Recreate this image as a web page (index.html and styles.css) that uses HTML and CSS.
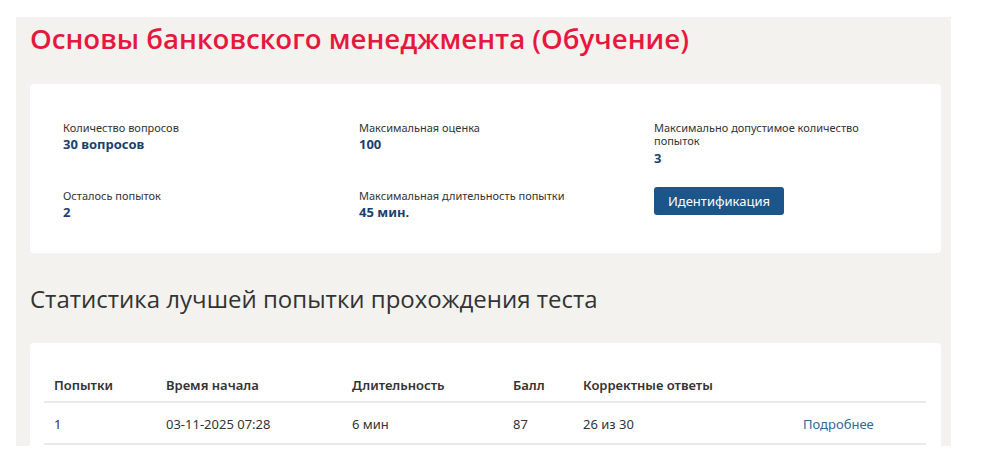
FILE: index.html
```html
<!DOCTYPE html>
<html lang="ru">
<head>
<meta charset="utf-8">
<title>Основы банковского менеджмента (Обучение)</title>
<link rel="stylesheet" href="styles.css">
</head>
<body>
<div class="page">
  <h1 class="title">Основы банковского менеджмента (Обучение)</h1>
  <section class="card info">
    <div class="grid">
      <div class="item">
        <div class="label">Количество вопросов</div>
        <div class="value">30 вопросов</div>
      </div>
      <div class="item">
        <div class="label">Максимальная оценка</div>
        <div class="value">100</div>
      </div>
      <div class="item">
        <div class="label narrow">Максимально допустимое количество попыток</div>
        <div class="value">3</div>
      </div>
      <div class="item">
        <div class="label">Осталось попыток</div>
        <div class="value">2</div>
      </div>
      <div class="item">
        <div class="label">Максимальная длительность попытки</div>
        <div class="value">45 мин.</div>
      </div>
      <div class="item">
        <button class="btn">Идентификация</button>
      </div>
    </div>
  </section>
  <h2 class="subtitle">Статистика лучшей попытки прохождения теста</h2>
  <section class="card stats">
    <table class="table">
      <thead>
        <tr>
          <th class="c1">Попытки</th>
          <th class="c2">Время начала</th>
          <th class="c3">Длительность</th>
          <th class="c4">Балл</th>
          <th class="c5">Корректные ответы</th>
          <th class="c6"></th>
        </tr>
      </thead>
      <tbody>
        <tr>
          <td>1</td>
          <td>03-11-2025 07:28</td>
          <td>6 мин</td>
          <td>87</td>
          <td>26 из 30</td>
          <td><a class="link" href="#">Подробнее</a></td>
        </tr>
      </tbody>
    </table>
  </section>
</div>
</body>
</html>
```
FILE: styles.css
```css
* { box-sizing: border-box; }
body {
  margin: 0;
  background: #ffffff;
  font-family: "Noto Sans", "Open Sans", sans-serif;
  color: #333333;
}
.page {
  margin: 17px 0 0 16px;
  width: 935px;
  height: 429px;
  overflow: hidden;
  background: #f3f2ef;
  padding: 0 10px 0 14px;
}
.title {
  margin: 0;
  padding-top: 3px;
  height: 67px;
  font-family: "Open Sans", "Noto Sans", sans-serif;
  font-weight: 600;
  font-size: 27.6px;
  line-height: 36px;
  color: #e8173e;
}
.card {
  background: #ffffff;
  border-radius: 4px;
}
.info {
  height: 169px;
  padding: 36px 0 0 33px;
}
.grid {
  display: grid;
  grid-template-columns: 296px 295px 280px;
  row-gap: 21px;
}
.label {
  font-size: 11px;
  line-height: 15px;
  color: #333333;
}
.label.narrow {
  max-width: 215px;
  line-height: 13px;
  padding-top: 1px;
  margin-bottom: 2px;
}
.value {
  font-size: 13px;
  line-height: 18px;
  font-weight: 700;
  color: #1c3f6e;
}
.btn {
  margin-top: -1px;
  height: 28px;
  width: 130px;
  padding: 0;
  border: none;
  border-radius: 3px;
  background: #1b5589;
  color: #ffffff;
  font-family: "Noto Sans", sans-serif;
  font-size: 13px;
}
.subtitle {
  margin: 0;
  height: 90px;
  padding-top: 30px;
  font-family: "Open Sans", "Noto Sans", sans-serif;
  font-weight: 400;
  font-size: 24px;
  line-height: 32px;
  color: #333333;
}
.stats {
  height: 120px;
  padding: 28px 15px 0 14px;
}
.table {
  width: 100%;
  border-collapse: collapse;
  font-size: 13px;
}
.table th {
  text-align: left;
  font-weight: 600;
  padding: 5px 0 7px 10px;
  border-bottom: 2px solid #eaeaea;
}
.table td {
  padding: 12px 0 10px 10px;
  border-bottom: 2px solid #eaeaea;
}
.c1 { width: 112px; }
.c2 { width: 186px; }
.c3 { width: 161px; }
.c4 { width: 70px; }
.c5 { width: 220px; }
.link {
  color: #2f6796;
  text-decoration: none;
}
```
